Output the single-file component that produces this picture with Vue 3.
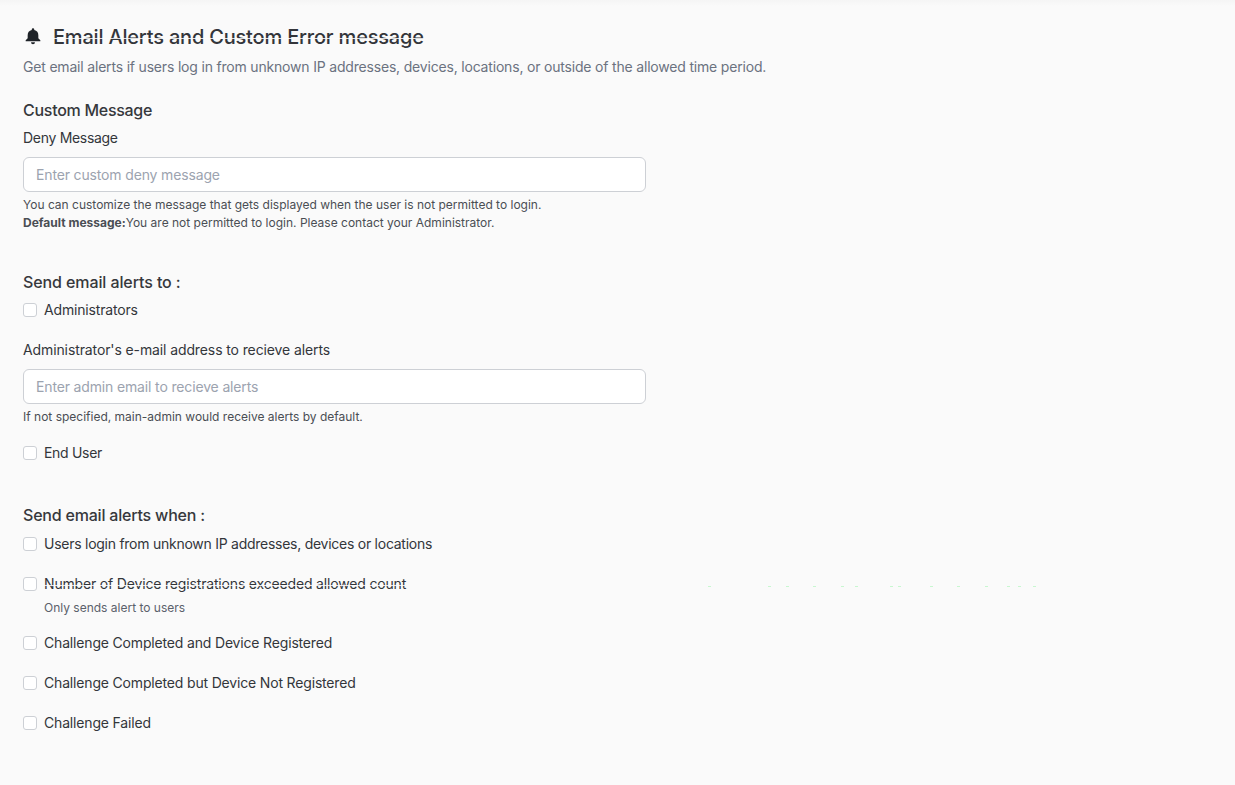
<template>
  <div class="page">
    <header class="head">
      <div class="title-row">
        <svg class="bell" viewBox="0 0 24 24" width="20" height="20">
          <path fill="#1f2328" d="M12 1.600a1.500 1.500 0 0 0-1.500 1.500v.5A6.400 6.400 0 0 0 5.600 9.800v3.600L3.200 15.800v1.400h17.600v-1.400l-2.400-2.400V9.800a6.400 6.400 0 0 0-4.900-6.200v-.5A1.500 1.500 0 0 0 12 1.600zM9.600 18.400a2.400 2.400 0 0 0 4.800 0z"/>
        </svg>
        <h1 class="title tear">Email Alerts and Custom Error message</h1>
      </div>
      <p class="subtitle">Get email alerts if users log in from unknown IP addresses, devices, locations, or outside of the allowed time period.</p>
    </header>

    <section class="custom">
      <h2 class="section-title">Custom Message</h2>
      <label class="field-label">Deny Message</label>
      <input class="text-input" type="text" placeholder="Enter custom deny message" />
      <p class="hint">You can customize the message that gets displayed when the user is not permitted to login.</p>
      <p class="hint"><b>Default message:</b>You are not permitted to login. Please contact your Administrator.</p>
    </section>

    <section class="send-to">
      <h2 class="section-title">Send email alerts to :</h2>
      <label class="check"><input type="checkbox" /><span>Administrators</span></label>
      <label class="field-label admin-label">Administrator's e-mail address to recieve alerts</label>
      <input class="text-input" type="text" placeholder="Enter admin email to recieve alerts" />
      <p class="hint">If not specified, main-admin would receive alerts by default.</p>
      <label class="check end-user"><input type="checkbox" /><span>End User</span></label>
    </section>

    <section class="send-when">
      <h2 class="section-title">Send email alerts when :</h2>
      <div v-for="item in alerts" :key="item.label" class="alert-item">
        <label class="check">
          <input type="checkbox" />
          <span :class="{ tear: item.note }">{{ item.label }}</span>
        </label>
        <p v-if="item.note" class="note">{{ item.note }}</p>
        <div v-if="item.note" class="specks">
          <i v-for="x in specks" :key="x" class="speck" :style="{ left: x + 'px' }"></i>
        </div>
      </div>
    </section>
  </div>
</template>

<script setup>
const alerts = [
  { label: 'Users login from unknown IP addresses, devices or locations' },
  { label: 'Number of Device registrations exceeded allowed count', note: 'Only sends alert to users' },
  { label: 'Challenge Completed and Device Registered' },
  { label: 'Challenge Completed but Device Not Registered' },
  { label: 'Challenge Failed' }
]

const specks = [708, 768, 786, 813, 841, 855, 890, 898, 930, 957, 985, 1007, 1018, 1033]
</script>

<style>
html, body { margin: 0; background: #fafafa; }
</style>

<style scoped>
.page {
  height: 785px;
  box-sizing: border-box;
  padding: 25px 23px 0;
  overflow: hidden;
  background: linear-gradient(#f5f5f5, #fafafa 6px);
  font-family: "Inter", "Noto Sans", sans-serif;
  color: #33363a;
  position: relative;
}
.title-row { display: flex; align-items: center; gap: 10px; height: 24px; }
.bell { flex-shrink: 0; }
.title { margin: 0; font-size: 20px; line-height: 24px; font-weight: 500; color: #33353a; letter-spacing: -0.19px; }
.subtitle { margin: 8px 0 0; font-size: 14px; line-height: 20px; color: #6b7280; letter-spacing: -0.187px; }
.custom { margin-top: 22px; }
.section-title { margin: 0; font-size: 16px; line-height: 22px; font-weight: 500; color: #36383c; letter-spacing: -0.28px; }
.send-to .section-title { letter-spacing: -0.1px; }
.send-when .section-title { letter-spacing: -0.2px; margin-bottom: 8px; }
.field-label { display: block; font-size: 14px; line-height: 20px; margin-top: 7px; letter-spacing: -0.3px; }
.text-input {
  display: block;
  box-sizing: border-box;
  width: 623px;
  height: 35px;
  margin-top: 9px;
  padding: 0 12px;
  border: 1px solid #cdd0d5;
  border-radius: 6px;
  background: #fff;
  font: inherit;
  font-size: 14px;
  letter-spacing: -0.15px;
}
.text-input::placeholder { color: #9ca3af; opacity: 1; }
.hint { margin: 0; font-size: 12px; line-height: 18px; color: #4a4e54; }
.text-input + .hint { margin-top: 4px; }
.hint b { font-weight: 700; }
.send-to { margin-top: 39px; }
.check { display: flex; align-items: center; gap: 7px; font-size: 14px; line-height: 20px; letter-spacing: -0.17px; }
.check input {
  appearance: none;
  box-sizing: border-box;
  width: 14px;
  height: 14px;
  margin: 0;
  border: 1px solid #cdd0d5;
  border-radius: 3px;
  background: #fff;
}
.send-to .check { margin-top: 7px; }
.admin-label { margin-top: 20px; letter-spacing: -0.11px; }
.send-to .end-user { margin-top: 17px; letter-spacing: -0.3px; }
.send-when { margin-top: 41px; }
.section-title + .alert-item .check { letter-spacing: -0.26px; }
.alert-item { margin-bottom: 20px; }
.alert-item:has(.note) { margin-bottom: 16px; }
.note { margin: 5px 0 0 21px; font-size: 12px; line-height: 18px; color: #5b616b; }

/* the horizontal tear running through two of the text lines */
.tear { position: relative; display: inline-block; }
.tear::after {
  content: "";
  position: absolute;
  left: 0;
  right: 0;
  top: 55%;
  height: 1px;
  background: #fafafa;
  opacity: 0.85;
}
.specks { position: absolute; left: 0; top: 586px; }
.speck {
  position: absolute;
  width: 3px;
  height: 1px;
  background: #c8f7d0;
}
</style>
